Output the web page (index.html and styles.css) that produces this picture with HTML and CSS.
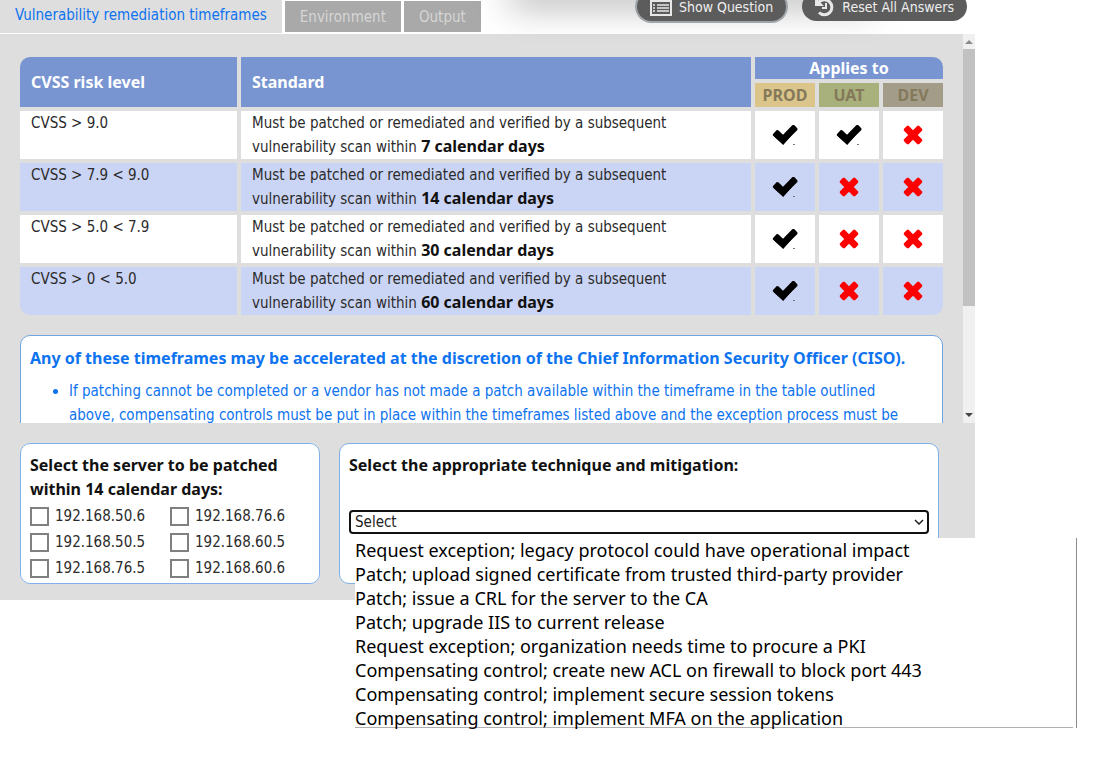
FILE: index.html
```html
<!DOCTYPE html>
<html lang="en">
<head>
  <meta charset="UTF-8" />
  <title>Vulnerability remediation timeframes</title>
  <meta name="viewport" content="width=device-width, initial-scale=1.0" />
  <link rel="stylesheet" href="styles.css">
</head>
<body>
  <svg class="sprite" aria-hidden="true">
    <symbol id="check" viewBox="0 0 26 22">
      <path d="M4 10.500l7 6.500L22.500 4" fill="none" stroke="currentColor" stroke-width="5.600" stroke-linejoin="miter" />
      <path d="M.8 10.300l4-4.200 1.500.2 4.700 4.500L20.500 1l1.700-.1 3.300 3.700-.1 1.500L11.500 19.500h-1.200L.9 11.500z" fill="currentColor" />
      <path d="M21 20h2v1h-2z" fill="#777" />
    </symbol>
    <symbol id="cross" viewBox="0 0 20 20">
      <path d="M4 .8h1.600L10 5.200 14.400.8H16L19.200 4v1.600L14.800 10l4.400 4.400V16L16 19.200h-1.600L10 14.800l-4.400 4.400H4L.8 16v-1.600L5.200 10 .8 5.600V4z" fill="currentColor" />
    </symbol>
  </svg>

  <div class="app">
    <header class="topbar">
      <nav class="tabs">
        <button class="tab active">Vulnerability remediation timeframes</button>
        <button class="tab">Environment</button>
        <button class="tab">Output</button>
      </nav>
      <div class="actions">
        <button class="pill focused">
          <svg width="22" height="18" viewBox="0 0 22 18"><path d="M1 1h20v16H1zM1 3h20" fill="none" stroke="#e8e8e8" stroke-width="2" /><path d="M3 7h2M3 10h2M3 13h2M7 7h12M7 10h12M7 13h12" stroke="#e8e8e8" stroke-width="1.500" /></svg>
          Show Question
        </button>
        <button class="pill">
          <svg width="20" height="20" viewBox="0 0 20 20"><path d="M4 5a7.500 7.500 0 1 1 0 10.500" fill="none" stroke="#e8e8e8" stroke-width="3" /><path d="M0 0v9h9z" fill="#e8e8e8" /><path d="M11 6v5H7" fill="none" stroke="#e8e8e8" stroke-width="2" /></svg>
          Reset All Answers
        </button>
      </div>
    </header>
    <div class="top-shadow"></div>

    <main class="content">
      <section class="scroller">
        <div class="scroll-body">
          <table class="standards">
            <colgroup>
              <col class="col-level"><col><col class="col-env"><col class="col-env"><col class="col-env">
            </colgroup>
            <thead>
              <tr>
                <th rowspan="2">CVSS risk level</th>
                <th rowspan="2">Standard</th>
                <th colspan="3" class="applies">Applies to</th>
              </tr>
              <tr>
                <th class="env prod">PROD</th>
                <th class="env uat">UAT</th>
                <th class="env dev">DEV</th>
              </tr>
            </thead>
            <tbody>
              <tr>
                <td>CVSS &gt; 9.0</td>
                <td>Must be patched or remediated and verified by a subsequent<br>vulnerability scan within <b>7 calendar days</b></td>
                <td class="mark"><svg class="check"><use href="#check" /></svg></td>
                <td class="mark"><svg class="check"><use href="#check" /></svg></td>
                <td class="mark"><svg class="cross"><use href="#cross" /></svg></td>
              </tr>
              <tr>
                <td>CVSS &gt; 7.9 &lt; 9.0</td>
                <td>Must be patched or remediated and verified by a subsequent<br>vulnerability scan within <b>14 calendar days</b></td>
                <td class="mark"><svg class="check"><use href="#check" /></svg></td>
                <td class="mark"><svg class="cross"><use href="#cross" /></svg></td>
                <td class="mark"><svg class="cross"><use href="#cross" /></svg></td>
              </tr>
              <tr>
                <td>CVSS &gt; 5.0 &lt; 7.9</td>
                <td>Must be patched or remediated and verified by a subsequent<br>vulnerability scan within <b>30 calendar days</b></td>
                <td class="mark"><svg class="check"><use href="#check" /></svg></td>
                <td class="mark"><svg class="cross"><use href="#cross" /></svg></td>
                <td class="mark"><svg class="cross"><use href="#cross" /></svg></td>
              </tr>
              <tr>
                <td>CVSS &gt; 0 &lt; 5.0</td>
                <td>Must be patched or remediated and verified by a subsequent<br>vulnerability scan within <b>60 calendar days</b></td>
                <td class="mark"><svg class="check"><use href="#check" /></svg></td>
                <td class="mark"><svg class="cross"><use href="#cross" /></svg></td>
                <td class="mark"><svg class="cross"><use href="#cross" /></svg></td>
              </tr>
            </tbody>
          </table>

          <div class="notice">
            <h2>Any of these timeframes may be accelerated at the discretion of the Chief Information Security Officer (CISO).</h2>
            <ul>
              <li>If patching cannot be completed or a vendor has not made a patch available within the timeframe in the table outlined above, compensating controls must be put in place within the timeframes listed above and the exception process must be</li>
            </ul>
          </div>
        </div>
        <div class="scrollbar">
          <svg width="8" height="5" viewBox="0 0 8 5"><path d="M0 5l4-4 4 4z" fill="#8a8a8a" /></svg>
          <div class="thumb"></div>
          <svg width="8" height="5" viewBox="0 0 8 5"><path d="M0 0l4 4 4-4z" fill="#444" /></svg>
        </div>
      </section>

      <form class="answers">
        <fieldset class="panel">
          <h3>Select the server to be patched within 14 calendar days:</h3>
          <div class="server-list">
            <label><input type="checkbox">192.168.50.6</label>
            <label><input type="checkbox">192.168.76.6</label>
            <label><input type="checkbox">192.168.50.5</label>
            <label><input type="checkbox">192.168.60.5</label>
            <label><input type="checkbox">192.168.76.5</label>
            <label><input type="checkbox">192.168.60.6</label>
          </div>
        </fieldset>
        <div class="panel">
          <h3><label for="technique">Select the appropriate technique and mitigation:</label></h3>
          <div class="select-wrap">
            <select id="technique">
              <option>Select</option>
            </select>
            <svg class="chevron" width="10" height="6" viewBox="0 0 10 6"><path d="M1 1l4 4 4-4" fill="none" stroke="#222" stroke-width="1.500" /></svg>
            <div class="menu">
              <ul>
                <li>Request exception; legacy protocol could have operational impact</li>
                <li>Patch; upload signed certificate from trusted third-party provider</li>
                <li>Patch; issue a CRL for the server to the CA</li>
                <li>Patch; upgrade IIS to current release</li>
                <li>Request exception; organization needs time to procure a PKI</li>
                <li>Compensating control; create new ACL on firewall to block port 443</li>
                <li>Compensating control; implement secure session tokens</li>
                <li>Compensating control; implement MFA on the application</li>
              </ul>
            </div>
          </div>
        </div>
      </form>
    </main>
  </div>
</body>
</html>
```
FILE: styles.css
```css
* {
  box-sizing: border-box;
}
body {
  min-height: 100vh;
  margin: 0;
  background: #fff;
  color: #2b2b2b;
  font-family: "DejaVu Sans Condensed", "Noto Sans", sans-serif;
  font-size: 15px;
  line-height: 24px;
}
button, select, input {
  font: inherit;
}
h2, h3, th, b {
  font-family: "Noto Sans", sans-serif;
  font-size: 16px;
}
.sprite {
  position: absolute;
  width: 0;
  height: 0;
}
.app {
  position: relative;
  max-width: 975px;
}

/* top bar */
.topbar {
  display: flex;
  justify-content: space-between;
  height: 34px;
  overflow: hidden;
}
.tabs {
  display: flex;
  align-items: flex-start;
  gap: 3px;
}
.tab {
  height: 31px;
  margin-top: 1px;
  padding: 0 15px;
  border: 0;
  background: #a9a9a9;
  color: #d6d6d6;
  white-space: nowrap;
}
.tab.active {
  height: 33px;
  margin-top: 0;
  padding: 0 15px 3px;
  background: #dedede;
  color: #0d73f0;
}
.actions {
  position: relative;
  z-index: 2;
  display: flex;
  gap: 16px;
  margin: -8px 8px 0 0;
}
.pill {
  display: flex;
  align-items: center;
  gap: 7px;
  height: 29px;
  padding: 0 13px;
  border: 0;
  border-radius: 15px;
  background: #5c5c5c;
  color: #eee;
  font-size: 14px;
  line-height: 14px;
  white-space: nowrap;
}
.pill.focused {
  box-shadow: 0 0 0 2px #a0a5aa;
}
.top-shadow {
  position: absolute;
  z-index: 1;
  top: -20px;
  left: 510px;
  width: 365px;
  height: 20px;
  box-shadow: 0 4px 36px rgba(0, 0, 0, 0.4);
}

/* scrolling policy area */
.content {
  background: #dedede;
  padding-bottom: 16px;
}
.scroller {
  display: flex;
  height: 389px;
  overflow: hidden;
}
.scroll-body {
  flex: 1;
  padding: 19px 16px;
}
.scrollbar {
  display: flex;
  flex-direction: column;
  align-items: center;
  width: 12px;
  padding: 5px 0;
  background: #f0f0f0;
}
.thumb {
  width: 100%;
  height: 257px;
  margin: 5px 0 auto;
  background: #c1c1c1;
}

.standards {
  width: 100%;
  table-layout: fixed;
  border-collapse: separate;
  border-spacing: 4px;
}
.col-level {
  width: 217px;
}
.col-env {
  width: 60px;
}
.standards th {
  padding: 0 11px;
  background: #7895d2;
  color: #fff;
  text-align: left;
}
.standards .applies {
  height: 22px;
  padding: 0;
  line-height: 22px;
  text-align: center;
}
.standards .env {
  padding: 0;
  color: #84795a;
  text-align: center;
}
.standards .prod {
  background: #dcc58a;
}
.standards .uat {
  background: #a8b07c;
}
.standards .dev {
  background: #a39c89;
}
.standards td {
  padding: 0 11px;
  background: #fff;
  vertical-align: top;
}
.standards tr:nth-child(even) td {
  background: #cad4f4;
}
.standards b {
  color: #111;
  line-height: 16px;
}
.standards .mark {
  padding: 0;
  text-align: center;
  vertical-align: middle;
}
.standards thead tr:first-child th:first-child {
  border-top-left-radius: 10px;
}
.standards .applies {
  border-top-right-radius: 10px;
}
.standards tbody tr:last-child td:first-child {
  border-bottom-left-radius: 10px;
}
.standards tbody tr:last-child td:last-child {
  border-bottom-right-radius: 10px;
}
.mark svg {
  display: block;
  margin: 0 auto;
}
.check {
  width: 26px;
  height: 22px;
  color: #000;
}
.cross {
  width: 20px;
  height: 20px;
  color: #f00;
}

.notice {
  margin: 16px 4px 0;
  padding: 10px 9px;
  border: 1px solid #6fa4e2;
  border-radius: 10px;
  background: #fff;
  color: #0d73f0;
}
.notice h2 {
  margin: 0 0 9px;
}
.notice ul {
  margin: 0;
  padding: 0 20px 0 39px;
}

/* answers */
.answers {
  display: grid;
  grid-template-columns: minmax(0, 1fr) minmax(0, 2fr);
  gap: 19px;
  padding: 20px 36px 0 20px;
}
.panel {
  min-width: 0;
  height: 141px;
  margin: 0;
  padding: 9px;
  border: 1px solid #7fb0e8;
  border-radius: 10px;
  background: #fff;
}
.panel h3 {
  margin: 0;
  color: #111;
}
.server-list {
  display: grid;
  grid-template-columns: 1fr 1fr;
  margin-top: 2px;
}
.server-list label {
  display: flex;
  align-items: center;
  gap: 6px;
  height: 26px;
}
.server-list input {
  appearance: none;
  width: 19px;
  height: 19px;
  margin: 0;
  border: 2px solid #808080;
  background: #fff;
}
.select-wrap {
  position: relative;
  margin-top: 33px;
}
.select-wrap select {
  appearance: none;
  display: block;
  width: 100%;
  height: 24px;
  padding: 0 4px;
  border: 2px solid #111;
  border-radius: 4px;
  background: #fff;
  color: #222;
  line-height: 20px;
}
.chevron {
  position: absolute;
  top: 9px;
  right: 5px;
}
.menu {
  position: absolute;
  z-index: 3;
  top: 28px;
  left: 6px;
  width: 722px;
  padding-right: 3px;
  border-right: 1px solid #8c8c8c;
  background: #fff;
  color: #000;
  font-family: "Noto Sans", sans-serif;
  font-size: 18px;
}
.menu ul {
  height: 190px;
  margin: 0;
  padding: 0;
  border-bottom: 1px solid #b0b0b0;
  list-style: none;
}
```
